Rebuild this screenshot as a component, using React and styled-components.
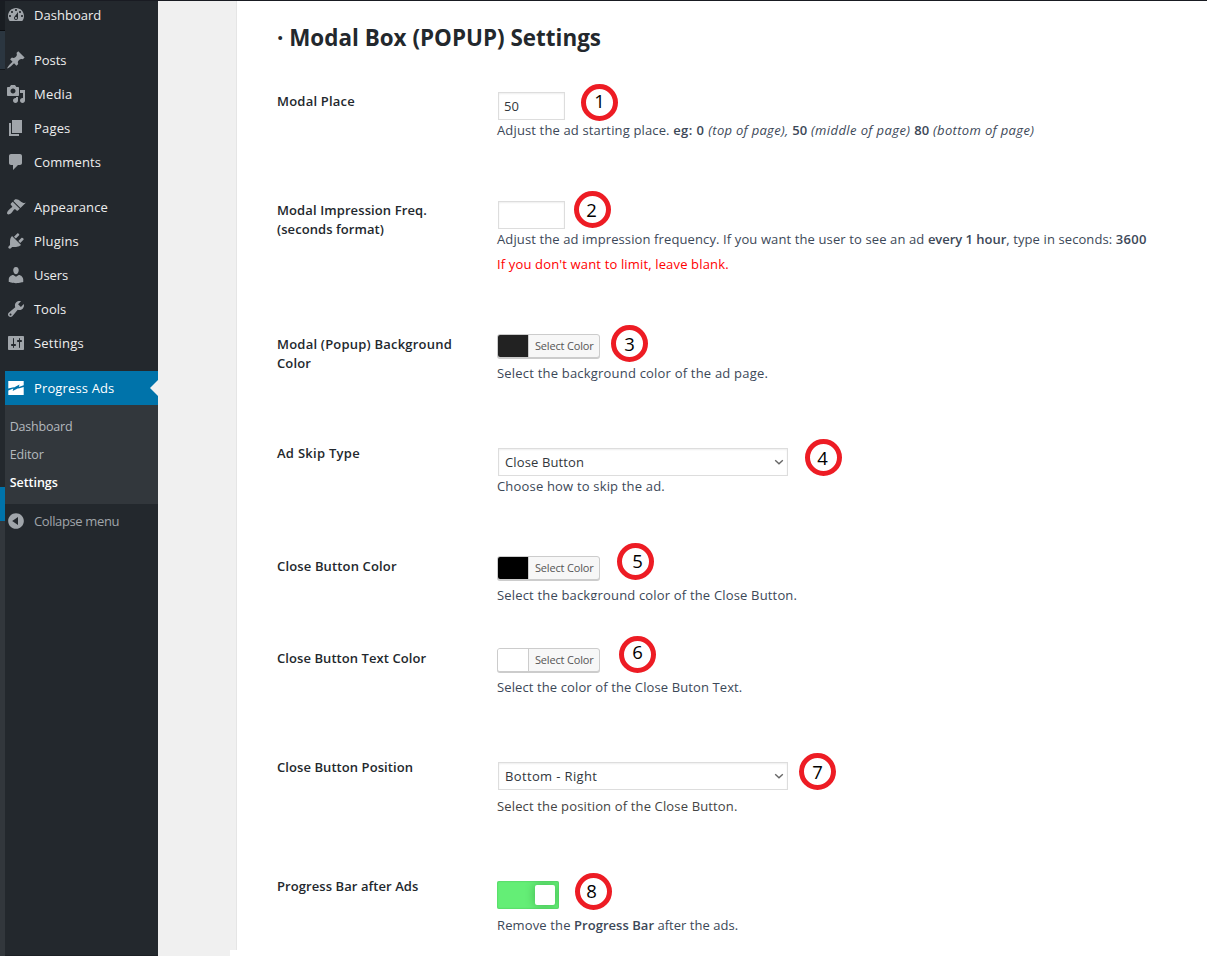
import React from "react";
import styled, { createGlobalStyle, css } from "styled-components";

const GlobalStyle = createGlobalStyle`
  *, *::before, *::after { box-sizing: border-box; }
  body {
    margin: 0;
    background: #fff;
    font-family: "Open Sans", "Noto Sans", sans-serif;
    font-size: 13px;
    color: #23282d;
  }
`;

const Page = styled.div`
  display: flex;
  width: 1207px;
  height: 956px;
  overflow: hidden;
  border-top: 1px solid #191b22;
  background: #fff;
`;

const EdgeStrip = styled.div`
  flex: none;
  display: flex;
  flex-direction: column;
  width: 5px;
`;

const EdgeBlock = styled.div`
  flex: ${(p) => (p.$h ? "none" : 1)};
  height: ${(p) => (p.$h ? `${p.$h}px` : "auto")};
  background: ${(p) => p.$color};
`;

const Sidebar = styled.nav`
  flex: none;
  width: 153px;
  background: #23282d;
  border-bottom: 1px solid #1c2025;
`;

const MenuList = styled.div`
  margin-top: -3px;
`;

const MenuItem = styled.a`
  position: relative;
  display: flex;
  align-items: center;
  height: 34px;
  margin-top: ${(p) => (p.$gap ? "11px" : 0)};
  padding-left: 1px;
  color: ${(p) => (p.$active ? "#fff" : p.$muted ? "#a0a5aa" : "#eee")};
  background: ${(p) => (p.$active ? "#0073aa" : "transparent")};
  white-space: nowrap;

  svg {
    flex: none;
    width: 20px;
    height: 20px;
    margin-right: 8px;
    fill: ${(p) => (p.$active ? "#fff" : "#a0a5aa")};
  }

  ${(p) =>
    p.$active &&
    css`
      &::after {
        content: "";
        position: absolute;
        right: 0;
        top: 9px;
        border: 8px solid transparent;
        border-left-width: 0;
        border-right-color: #f1f1f1;
      }
    `}
`;

const Text = styled.span`
  letter-spacing: ${(p) => p.$ls || 0}px;
`;

const Strong = styled(Text).attrs({ as: "b" })`
  font-weight: 600;
`;

const Italic = styled(Text).attrs({ as: "em" })``;

const SubMenu = styled.div`
  height: 99px;
  padding: 8px 0 0 4.7px;
  background: #32373c;
`;

const SubItem = styled.a`
  display: block;
  height: 28px;
  line-height: 28px;
  font-size: 12.5px;
  color: ${(p) => (p.$current ? "#fff" : "#b4b9be")};
  font-weight: ${(p) => (p.$current ? 600 : 400)};
  letter-spacing: ${(p) => p.$ls}px;
`;

const Gutter = styled.div`
  flex: none;
  display: flex;
  flex-direction: column;
  width: 79px;
`;

const GutterMain = styled.div`
  flex: 1;
  background: #f0f0f0;
  border-right: 1px solid #e5e5e5;
`;

const GutterFoot = styled.div`
  width: 72px;
  height: 6px;
  background: #f0f0f0;
`;

const Main = styled.main`
  flex: 1;
  padding: 21px 0 0 40px;
`;

const Heading = styled.h2`
  height: 69px;
  margin: 0;
  line-height: 32px;
  font-size: 22.4px;
  font-weight: 700;
  letter-spacing: 0.02px;
  white-space: nowrap;
`;

const Row = styled.section`
  display: grid;
  grid-template-columns: 220px 1fr;
  align-items: start;
  height: ${(p) => p.$h}px;
`;

const Label = styled.div`
  line-height: 19px;
  padding-top: 1px;
  font-weight: 600;
  white-space: nowrap;
`;

const LabelLine = styled(Text)`
  display: block;
`;

const Field = styled.div`
  position: relative;
  padding-top: ${(p) => p.$pt || 0}px;
`;

const Description = styled.p`
  margin: ${(p) => p.$mt || 0}px 0 0;
  line-height: 20px;
  color: ${(p) => p.$color || "#3c4858"};
  letter-spacing: ${(p) => p.$ls || 0}px;
  white-space: nowrap;
  clip-path: ${(p) => (p.$cut ? `inset(0 0 ${p.$cut}px 0)` : "none")};
`;

const NumberBox = styled.div`
  width: 67px;
  height: 28px;
  margin-left: 1px;
  padding-left: 5px;
  border: 1px solid #ddd;
  box-shadow: inset 0 1px 2px rgba(0, 0, 0, 0.07);
  line-height: 26px;
  color: #32373c;
`;

const SelectBox = styled.div`
  display: flex;
  align-items: center;
  justify-content: space-between;
  width: 290px;
  height: 28px;
  margin-left: 1px;
  padding: 0 3px 0 6px;
  border: 1px solid #ddd;
  box-shadow: inset 0 1px 2px rgba(0, 0, 0, 0.07);
  color: #32373c;
`;

const ColorButton = styled.div`
  display: flex;
  width: 103px;
  height: 24px;
  border: 1px solid #ccc;
  border-radius: 3px;
  box-shadow: 0 1px 0 #ccc;
  background: #f7f7f7;
  overflow: hidden;
`;

const Swatch = styled.div`
  width: 31px;
  border-right: 1px solid #ccc;
  background: ${(p) => p.$color};
`;

const ColorText = styled.span`
  padding-left: 6px;
  line-height: 22px;
  font-size: 11px;
  letter-spacing: -0.18px;
  color: #555;
`;

const Toggle = styled.div`
  display: flex;
  justify-content: flex-end;
  width: 62px;
  height: 28px;
  padding: 4px;
  border-radius: 2px;
  background: #64ee76;
  box-shadow: inset 0 0 2px rgba(0, 90, 20, 0.35);
  overflow: hidden;
`;

const Knob = styled.div`
  width: 20px;
  height: 20px;
  border-radius: 2px;
  background: #fff;
  box-shadow: 0 0 10px rgba(0, 70, 10, 0.35);
`;

/* Numbered marker laid over the control it annotates. */
const Marker = styled.div`
  position: absolute;
  left: ${(p) => p.$x}px;
  top: ${(p) => p.$y}px;
  width: 37px;
  height: 37px;
  border: 5px solid #ed1c24;
  border-radius: 50%;
  background: #fff;

  span {
    position: absolute;
    left: ${(p) => 8.2 + (p.$dx || 0)}px;
    top: ${(p) => p.$dy || 0}px;
    font: 18.5px/25px "Open Sans", sans-serif;
    color: #000;
  }
`;

const paths = {
  dashboard:
    "M3.76 16h12.48c1.1-1.37 1.76-3.11 1.76-5 0-4.42-3.58-8-8-8s-8 3.58-8 8c0 1.89.66 3.63 1.76 5zM10 4c.55 0 1 .45 1 1s-.45 1-1 1-1-.45-1-1 .45-1 1-1zM6 6c.55 0 1 .45 1 1s-.45 1-1 1-1-.45-1-1 .45-1 1-1zm8 0c.55 0 1 .45 1 1s-.45 1-1 1-1-.45-1-1 .45-1 1-1zm-5.37 5.55L12 7v6c0 1.1-.9 2-2 2s-2-.9-2-2c0-.57.24-1.08.63-1.45zM4 10c.55 0 1 .45 1 1s-.45 1-1 1-1-.45-1-1 .45-1 1-1zm12 0c.55 0 1 .45 1 1s-.45 1-1 1-1-.45-1-1 .45-1 1-1zm-5 3c0-.55-.45-1-1-1s-1 .45-1 1 .45 1 1 1 1-.45 1-1z",
  posts:
    "M10.44 3.02l1.82-1.82 6.36 6.35-1.83 1.82c-1.05-.68-2.48-.57-3.41.36l-.75.75c-.92.93-1.04 2.35-.35 3.41l-1.83 1.82-2.41-2.41-2.8 2.79c-.42.42-3.38 2.71-3.8 2.29s1.86-3.39 2.28-3.81l2.79-2.79L4.1 9.36l1.83-1.82c1.05.69 2.48.57 3.4-.36l.75-.75c.93-.92 1.05-2.35.36-3.41z",
  media:
    "M13 11V4c0-.55-.45-1-1-1h-1.67L9 1H5L3.67 3H2c-.55 0-1 .45-1 1v7c0 .55.45 1 1 1h10c.55 0 1-.45 1-1zM7 4.5c1.38 0 2.5 1.12 2.5 2.5S8.38 9.5 7 9.5 4.5 8.38 4.5 7 5.62 4.5 7 4.5zM14 6h5v10.5c0 1.38-1.12 2.5-2.5 2.5S14 17.88 14 16.5s1.12-2.5 2.5-2.5c.17 0 .34.02.5.05V9h-3V6zm-4 8.05V13h2v3.5c0 1.38-1.12 2.5-2.5 2.5S7 17.88 7 16.5 8.12 14 9.5 14c.17 0 .34.02.5.05z",
  pages: "M6 15V2h10v13H6zm-1 1h8v2H3V5h2v11z",
  comments:
    "M5 2h9c1.1 0 2 .9 2 2v7c0 1.1-.9 2-2 2h-2l-5 5v-5H5c-1.1 0-2-.9-2-2V4c0-1.1.9-2 2-2z",
  appearance:
    "M14.48 11.06L7.41 3.99l1.5-1.5c.5-.56 2.3-.47 3.51.32 1.21.8 1.43 1.28 2.91 2.1 1.18.64 2.45 1.26 4.45.85zm-.71.71L6.7 4.7 4.93 6.47c-.39.39-.39 1.02 0 1.41l1.06 1.06c.39.39.39 1.03 0 1.42-.6.6-1.43 1.11-2.21 1.69-.35.26-.7.53-1.01.84C1.43 14.23.4 16.08 1.4 17.07c.99 1 2.84-.03 4.18-1.36.31-.31.58-.66.85-1.02.57-.78 1.08-1.61 1.69-2.21.39-.39 1.02-.39 1.41 0l1.06 1.06c.39.39 1.02.39 1.41 0z",
  plugins:
    "M13.11 4.36L9.87 7.6 8 5.73l3.24-3.24c.35-.34 1.05-.2 1.56.32.52.51.66 1.21.31 1.55zm-8 1.77l.91-1.12 9.01 9.01-1.19.84c-.71.71-2.63 1.16-3.82 1.16H6.14L4.9 17.26c-.59.59-1.54.59-2.12 0-.59-.58-.59-1.53 0-2.12l1.24-1.24v-3.88c0-1.13.4-3.19 1.09-3.89zm7.26 3.97l3.24-3.24c.34-.35 1.04-.21 1.55.31.52.51.66 1.21.31 1.55l-3.24 3.25z",
  users:
    "M10 9.25c-2.27 0-2.73-3.44-2.73-3.44C7 4.02 7.82 2 9.97 2c2.16 0 2.98 2.02 2.71 3.81 0 0-.41 3.44-2.68 3.44zm0 2.57L12.72 10c2.39 0 4.52 2.33 4.52 4.53v2.49s-3.65 1.13-7.24 1.13c-3.65 0-7.24-1.13-7.24-1.13v-2.49c0-2.25 1.94-4.48 4.47-4.48z",
  tools:
    "M16.68 9.77c-1.34 1.34-3.3 1.67-4.95.99l-5.41 6.52c-.99.99-2.59.99-3.58 0s-.99-2.59 0-3.57l6.52-5.42c-.68-1.65-.35-3.61.99-4.95 1.28-1.28 3.12-1.62 4.72-1.06l-2.89 2.89 2.82 2.82 2.86-2.87c.53 1.58.18 3.39-1.08 4.65zM3.81 16.21c.4.39 1.04.39 1.43 0 .4-.4.4-1.04 0-1.43-.39-.4-1.03-.4-1.43 0-.39.39-.39 1.03 0 1.43z",
  settings:
    "M18 16V4c0-.55-.45-1-1-1H3c-.55 0-1 .45-1 1v12c0 .55.45 1 1 1h14c.55 0 1-.45 1-1zM8 11h1c.55 0 1 .45 1 1s-.45 1-1 1H8v1.5c0 .28-.22.5-.5.5s-.5-.22-.5-.5V13H6c-.55 0-1-.45-1-1s.45-1 1-1h1V5.5c0-.28.22-.5.5-.5s.5.22.5.5V11zm5-2h-1c-.55 0-1-.45-1-1s.45-1 1-1h1V5.5c0-.28.22-.5.5-.5s.5.22.5.5V7h1c.55 0 1 .45 1 1s-.45 1-1 1h-1v5.5c0 .28-.22.5-.5.5s-.5-.22-.5-.5V9z",
  progress:
    "M2.3 3h15.4v4.3L12.8 9l.7-2.4L8 9.4l-.6-.1-5.1 1.2zM2.3 12.6l5-2-.6 2.5 5.4-2.8.5.2 5.1-1.6V17H2.3z",
  collapse:
    "M10 2.16c4.33 0 7.84 3.51 7.84 7.84s-3.51 7.84-7.84 7.84S2.16 14.33 2.16 10 5.67 2.16 10 2.16zm2 11.72V6.12L6.18 9.97z",
};

const Icon = ({ name }) => (
  <svg viewBox="0 0 20 20" aria-hidden="true">
    <path fillRule="evenodd" d={paths[name]} />
  </svg>
);

const menu = [
  { icon: "dashboard", text: "Dashboard", ls: 0.03 },
  { icon: "posts", text: "Posts", ls: -0.03, gap: true },
  { icon: "media", text: "Media", ls: 0.21 },
  { icon: "pages", text: "Pages", ls: 0.18 },
  { icon: "comments", text: "Comments", ls: 0.1 },
  { icon: "appearance", text: "Appearance", ls: 0.13, gap: true },
  { icon: "plugins", text: "Plugins", ls: 0.2 },
  { icon: "users", text: "Users", ls: -0.1 },
  { icon: "tools", text: "Tools", ls: -0.05 },
  { icon: "settings", text: "Settings", ls: 0.22 },
  { icon: "progress", text: "Progress Ads", ls: 0.14, gap: true, active: true },
];

const Select = ({ children, ls }) => (
  <SelectBox>
    <Text $ls={ls}>{children}</Text>
    <svg width="10" height="8" viewBox="0 0 10 8">
      <path d="M1.2 2.3l3.8 3.5 3.8-3.5" fill="none" stroke="#666" strokeWidth="1.4" />
    </svg>
  </SelectBox>
);

const ColorPicker = ({ color }) => (
  <ColorButton>
    <Swatch $color={color} />
    <ColorText>Select Color</ColorText>
  </ColorButton>
);

const Mark = ({ n, ...pos }) => (
  <Marker {...pos}>
    <span>{n}</span>
  </Marker>
);

export default function App() {
  return (
    <>
      <GlobalStyle />
      <Page>
        <EdgeStrip>
          <EdgeBlock $h={29} $color="#191d22" />
          <EdgeBlock $h={1} $color="#0b0d10" />
          <EdgeBlock $h={38} $color="#2b3640" />
          <EdgeBlock $h={1} $color="#14181c" />
          <EdgeBlock $h={417} $color="#23282d" />
          <EdgeBlock $h={34} $color="#0073aa" />
          <EdgeBlock $color="#32373c" />
        </EdgeStrip>
        <Sidebar>
          <MenuList>
            {menu.map((m) => (
              <MenuItem key={m.text} $gap={m.gap} $active={m.active}>
                <Icon name={m.icon} />
                <Text $ls={m.ls}>{m.text}</Text>
              </MenuItem>
            ))}
            <SubMenu>
              <SubItem $ls={-0.2}>Dashboard</SubItem>
              <SubItem $ls={-0.14}>Editor</SubItem>
              <SubItem $current $ls={-0.05}>Settings</SubItem>
            </SubMenu>
            <MenuItem $muted>
              <Icon name="collapse" />
              <Text $ls={-0.37}>Collapse menu</Text>
            </MenuItem>
          </MenuList>
        </Sidebar>
        <Gutter>
          <GutterMain />
          <GutterFoot />
        </Gutter>
        <Main>
          <Heading>· Modal Box (POPUP) Settings</Heading>

          <Row $h={109}>
            <Label><LabelLine $ls={0.21}>Modal Place</LabelLine></Label>
            <Field $pt={1}>
              <NumberBox>50</NumberBox>
              <Description>
                <Text $ls={0.14}>Adjust the ad starting place. </Text>
                <Strong $ls={0.45}>eg: 0 </Strong>
                <Italic $ls={0.3}>(top of page), </Italic>
                <Strong $ls={0.2}>50 </Strong>
                <Italic $ls={0.4}>(middle of page) </Italic>
                <Strong $ls={0.2}>80 </Strong>
                <Italic $ls={0.35}>(bottom of page)</Italic>
              </Description>
              <Mark n="1" $x={84} $y={-7} $dy={-1} />
            </Field>
          </Row>

          <Row $h={134}>
            <Label>
              <LabelLine $ls={0.1}>Modal Impression Freq.</LabelLine>
              <LabelLine $ls={0.07}>(seconds format)</LabelLine>
            </Label>
            <Field $pt={1}>
              <NumberBox />
              <Description>
                <Text $ls={0.115}>
                  Adjust the ad impression frequency. If you want the user to see an ad{" "}
                </Text>
                <Strong $ls={-0.03}>every 1 hour</Strong>
                <Text $ls={0.1}>, type in seconds: </Text>
                <Strong $ls={0.3}>3600</Strong>
              </Description>
              <Description $mt={5} $color="#f00" $ls={0.15}>
                If you don't want to limit, leave blank.
              </Description>
              <Mark n="2" $x={77} $y={-9} $dx={-1} $dy={1} />
            </Field>
          </Row>

          <Row $h={109}>
            <Label>
              <LabelLine $ls={0.21}>Modal (Popup) Background</LabelLine>
              <LabelLine $ls={0.13}>Color</LabelLine>
            </Label>
            <Field>
              <ColorPicker color="#222" />
              <Description $mt={5} $ls={0.2}>Select the background color of the ad page.</Description>
              <Mark n="3" $x={114} $y={-9} $dy={1} />
            </Field>
          </Row>

          <Row $h={113}>
            <Label><LabelLine $ls={0.28}>Ad Skip Type</LabelLine></Label>
            <Field $pt={5}>
              <Select ls={0.12}>Close Button</Select>
              <Description $ls={0.18}>Choose how to skip the ad.</Description>
              <Mark n="4" $x={308} $y={-4} $dx={-1} $dy={1} />
            </Field>
          </Row>

          <Row $h={92}>
            <Label><LabelLine $ls={0.15}>Close Button Color</LabelLine></Label>
            <Field>
              <ColorPicker color="#000" />
              <Description $mt={5} $ls={0.17} $cut={5}>
                Select the background color of the Close Button.
              </Description>
              <Mark n="5" $x={120} $y={-13} $dx={2} />
            </Field>
          </Row>

          <Row $h={109}>
            <Label><LabelLine $ls={0.07}>Close Button Text Color</LabelLine></Label>
            <Field>
              <ColorPicker color="#fff" />
              <Description $mt={5} $ls={0.11}>Select the color of the Close Buton Text.</Description>
              <Mark n="6" $x={122} $y={-12} $dy={-2} />
            </Field>
          </Row>

          <Row $h={119}>
            <Label><LabelLine $ls={0.07}>Close Button Position</LabelLine></Label>
            <Field $pt={5}>
              <Select ls={0.36}>Bottom - Right</Select>
              <Description $mt={6} $ls={0.144} $color="#444">
                Select the position of the Close Button.
              </Description>
              <Mark n="7" $x={302} $y={-4} $dy={1} />
            </Field>
          </Row>

          <Row $h={70}>
            <Label><LabelLine $ls={0.07}>Progress Bar after Ads</LabelLine></Label>
            <Field $pt={5}>
              <Toggle><Knob /></Toggle>
              <Description $mt={6}>
                <Text $ls={0.13}>Remove the </Text>
                <Strong $ls={0.03}>Progress Bar</Strong>
                <Text $ls={0.03}> after the ads.</Text>
              </Description>
              <Mark n="8" $x={78} $y={-3} $dx={-2} />
            </Field>
          </Row>
        </Main>
      </Page>
    </>
  );
}
